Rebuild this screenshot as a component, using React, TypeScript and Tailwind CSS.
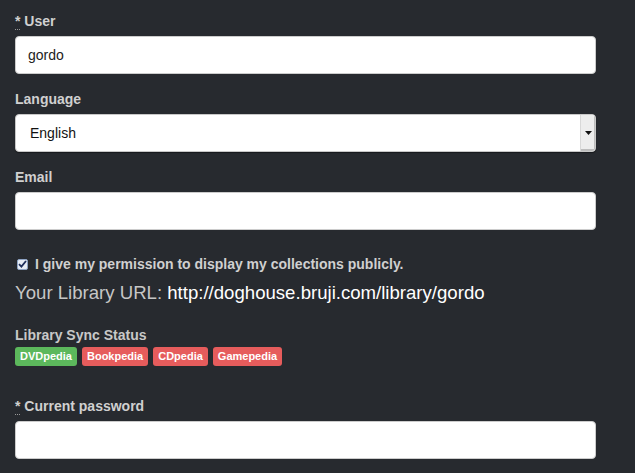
import React from "react";

const font = { fontFamily: '"Liberation Sans", Arial, sans-serif' };

const Req = () => (
  <abbr title="required" className="no-underline border-b border-dotted border-[#999] cursor-help">
    *
  </abbr>
);

const Label = ({ children }: { children: React.ReactNode }) => (
  <label className="block h-5 mb-[5px] text-[14px] leading-5 font-bold text-[#d0d0d0]">{children}</label>
);

const TextInput = ({ value }: { value?: string }) => (
  <input
    defaultValue={value}
    className="block w-[581px] h-[38px] px-[12px] rounded-[4px] bg-white border border-[#ccc] text-[14px] text-[#222] outline-none"
    style={font}
  />
);

const badges = [
  { name: "DVDpedia", ok: true },
  { name: "Bookpedia", ok: false },
  { name: "CDpedia", ok: false },
  { name: "Gamepedia", ok: false },
];

export default function App() {
  return (
    <div className="w-[635px] h-[473px] overflow-hidden bg-[#272a2f] px-[15px] pt-[11px]" style={font}>
      <div className="mb-[15px]">
        <Label>
          <Req /> User
        </Label>
        <TextInput value="gordo" />
      </div>

      <div className="mb-[15px]">
        <Label>Language</Label>
        <div className="flex w-[581px] h-[38px] rounded-[4px] bg-white border border-[#c8c8c8] shadow-[0_1px_1px_rgba(0,0,0,0.4)] overflow-hidden">
          <div className="flex-1 flex items-center pl-[14px] text-[14px] text-[#111]">English</div>
          <div className="w-[15px] flex items-center justify-center bg-[#ededed] border-l border-[#d8d8d8] shadow-[inset_-1px_-2px_0_#bdbdbd]">
            <svg width="7" height="4" viewBox="0 0 7 4">
              <path d="M0 0h7L3.5 4z" fill="#111" />
            </svg>
          </div>
        </div>
      </div>

      <div className="mb-[15px]">
        <Label>Email</Label>
        <TextInput />
      </div>

      <div className="mt-[24px] flex items-center h-5 text-[14px] font-bold text-[#d0d0d0]">
        <span className="ml-[2px] mr-[7px] w-[11px] h-[11px] rounded-[2px] bg-[#e6ecf5] border border-[#8ea3c4] flex items-center justify-center">
          <svg width="9" height="8" viewBox="0 0 9 8">
            <path d="M1 4.2 3.4 6.6 8 1" stroke="#1f2f5c" strokeWidth="1.8" fill="none" />
          </svg>
        </span>
        I give my permission to display my collections publicly.
      </div>

      <div className="mt-[8px] h-[22px] leading-[22px] text-[18.6px] text-[#c6c6c6]">
        Your Library URL: <span className="text-white">http://doghouse.bruji.com/library/gordo</span>
      </div>

      <div className="mt-[21px]">
        <div className="h-5 leading-5 text-[14px] font-bold text-[#c8c8c8]">Library Sync Status</div>
        <div className="mt-[2px] flex gap-[5px]">
          {badges.map(b => (
            <span
              key={b.name}
              className={`h-[19px] px-[5px] rounded-[3px] text-[11px] leading-[19px] font-bold text-white ${
                b.ok ? "bg-[#5cb85c]" : "bg-[#e65c5c]"
              }`}
            >
              {b.name}
            </span>
          ))}
        </div>
      </div>

      <div className="mt-[30px]">
        <Label>
          <Req /> Current password
        </Label>
        <TextInput />
      </div>
    </div>
  );
}
